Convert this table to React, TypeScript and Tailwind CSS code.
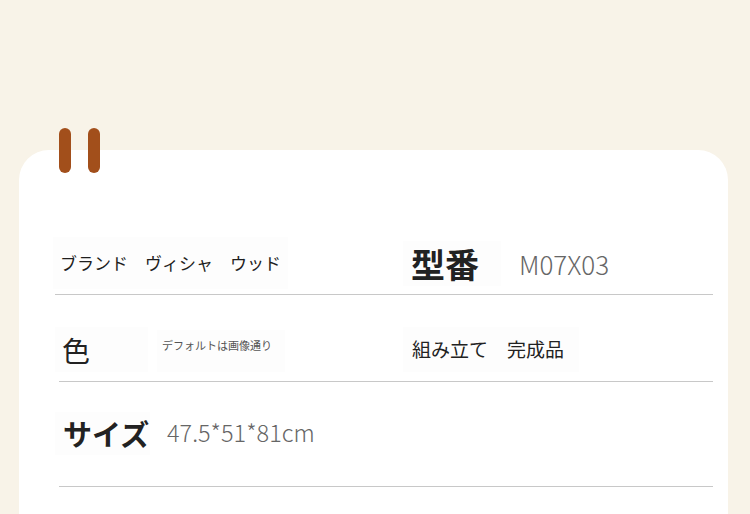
import React from 'react';

const jp = { fontFamily: '"Noto Sans CJK JP", "Noto Sans", sans-serif' };

const Rule: React.FC<{ inset?: boolean }> = ({ inset }) => (
    <div className={`h-px bg-[#c8c8c8] ${inset ? 'ml-[4px]' : ''}`}></div>
);

const App: React.FC = () => {
    return (
        <div className="w-[750px] h-[514px] overflow-hidden bg-[#f8f3e8]" style={jp}>
            <div className="relative ml-[19px] mt-[150px] w-[709px] h-[420px] rounded-t-[30px] bg-white pl-[36px] pr-[15px] pt-[86px]">
                {/* binder tabs */}
                <div className="absolute left-[40px] top-[-22px] w-[12px] h-[45px] rounded-full bg-[#a24f1b]"></div>
                <div className="absolute left-[69px] top-[-22px] w-[12px] h-[45px] rounded-full bg-[#a24f1b]"></div>

                {/* row 1 */}
                <div className="flex items-center h-[58px] pb-[4px]">
                    <div className="w-[348px] flex">
                        <div className="h-[52px] ml-[-2px] px-[7px] flex items-center bg-[#fdfdfd] text-[17px] text-[#1e1e1e]">
                            ブランド　ヴィシャ　ウッド
                        </div>
                    </div>
                    <div className="flex items-center">
                        <div className="h-[45px] px-[8px] pr-[22px] flex items-center bg-[#fdfdfd] text-[34px] font-semibold text-[#222]">
                            型番
                        </div>
                        <span className="ml-[18px] text-[26px] font-light text-[#666]">M07X03</span>
                    </div>
                </div>
                <Rule />

                {/* row 2 */}
                <div className="flex h-[86px] pt-[32px]">
                    <div className="w-[348px] flex items-start">
                        <div className="h-[45px] w-[93px] pl-[7px] flex items-center bg-[#fdfdfd] text-[28px] text-[#222]">
                            色
                        </div>
                        <div className="ml-[9px] mt-[3px] h-[42px] w-[128px] pl-[5px] pt-[7px] bg-[#fdfdfd] text-[11px] text-[#555]">
                            デフォルトは画像通り
                        </div>
                    </div>
                    <div className="h-[45px] px-[9px] pr-[15px] flex items-center bg-[#fdfdfd] text-[19px] text-[#222]">
                        組み立て　完成品
                    </div>
                </div>
                <Rule inset />

                {/* row 3 */}
                <div className="flex items-start h-[104px] pt-[30px]">
                    <div className="h-[43px] w-[95px] pl-[8px] flex items-center bg-[#fdfdfd] text-[29px] font-semibold text-[#222]">
                        サイズ
                    </div>
                    <span className="ml-[17px] mt-[3px] text-[23.5px] font-light text-[#666]">47.5*51*81cm</span>
                </div>
                <Rule inset />
            </div>
        </div>
    );
};

export default App;
